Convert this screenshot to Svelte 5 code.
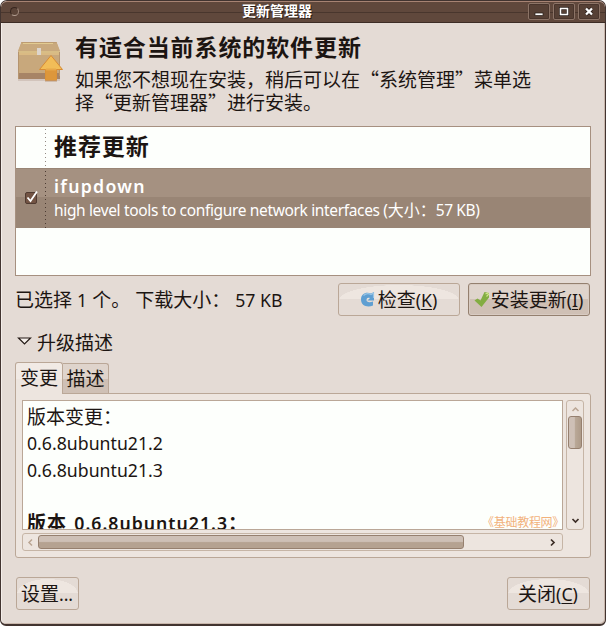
<script>
  const changes = ['0.6.8ubuntu21.2', '0.6.8ubuntu21.3'];
  let checked = $state(true);
</script>

<main class="window">
  <header class="titlebar">
    <i class="dot"></i>
    <h1>更新管理器</h1>
    <div class="controls">
      <button aria-label="最小化"><svg width="12" height="10"><rect x="2" y="6" width="8" height="2.500" fill="#fff" stroke="#241a16" stroke-width=".7"/></svg></button>
      <button aria-label="最大化"><svg width="12" height="10"><rect x="2.500" y="1.500" width="7" height="6" fill="none" stroke="#241a16" stroke-width="3"/><rect x="2.500" y="1.500" width="7" height="6" fill="none" stroke="#fff" stroke-width="1.600"/></svg></button>
      <button aria-label="关闭"><svg width="12" height="10"><path d="M3 1.500l6 6M9 1.500l-6 6" stroke="#241a16" stroke-width="3.600"/><path d="M3 1.500l6 6M9 1.500l-6 6" stroke="#fff" stroke-width="2.300"/></svg></button>
    </div>
  </header>

  <section class="intro">
    <svg class="package" width="48" height="46" viewBox="0 0 48 46">
      <path d="M4.500 3h35L43 13v27H1V13z" fill="#c8a87c"/>
      <path d="M4.500 3h35L43 12H1z" fill="#c9a97d"/>
      <path d="M4.500 3.500h35" stroke="#bd9c72"/>
      <path d="M6 4.500h30" stroke="#e2cb91"/>
      <path d="M2 13h41" stroke="#dec48a" stroke-width="1.500"/>
      <path d="M2 15h41" stroke="#e0c086" stroke-width="1.500"/>
      <path d="M1 34h42v6H1z" fill="#a78466"/>
      <path d="M1.500 13v27M42.500 13v24" stroke="#b5946f"/>
      <path d="M1 41h42" stroke="#cdbdb3" stroke-width="1.500"/>
      <path d="M20 9h4v7h-4z" fill="#ddd5cd"/>
      <path d="M34 16.500l11.500 14h-6v11H28.500v-11h-6z" fill="#f2bd58" stroke="#d88c34"/>
      <path d="M28.500 31h11v10h-11z" fill="#dd973b"/>
      <path d="M29 30.500h10" stroke="#e8a849" stroke-width="2"/>
      <path d="M28 42h12" stroke="#b89b83"/>
    </svg>
    <div>
      <h2>有适合当前系统的软件更新</h2>
      <p>如果您不想现在安装，稍后可以在“系统管理”菜单选</p>
      <p>择“更新管理器”进行安装。</p>
    </div>
  </section>

  <section class="updates">
    <div class="group"><i class="divider"></i><h2>推荐更新</h2></div>
    <div class="update">
      <button class="check" aria-label="选择" onclick={() => (checked = !checked)}>
        {#if checked}<svg width="13" height="13" viewBox="0 0 13 13"><path d="M2.500 6.500l3 3.500L12 0.500" fill="none" stroke="#fff" stroke-width="1.800"/></svg>{/if}
      </button>
      <i class="divider"></i>
      <div class="info">
        <strong>ifupdown</strong>
        <span class="desc"><span class="la">high level tools to configure network interfaces (</span>大小：<span class="la kb">57 KB)</span></span>
      </div>
    </div>
  </section>

  <section class="status">
    <p>已选择<span class="la one">1</span>个。<span class="dl">下载大小：</span><span class="la size">57 KB</span></p>
    <button class="btn wide">
      <svg width="16" height="17" viewBox="0 0 16 17"><path d="M14 9.500H7.500l2.500-2.500C7.500 6 6.500 7.500 6.500 9c0 2 2.500 2.800 6.500 1.500v4C7 17 1 14.500 1 8.500 1 3 6 .500 11 2.500L14 1z" fill="#5f9fd2"/><path d="M3.500 4.500Q7 1.300 11 3.500l2.500-1.500v5" fill="none" stroke="#9bc6e5" stroke-width="1.200"/></svg>
      <span>检查<span class="la">(<u>K</u>)</span></span>
    </button>
    <button class="btn wide primary">
      <svg width="16" height="17" viewBox="0 0 16 17"><path d="M.500 9.500l3-2 3 2L10.500 1l4.500 1v4.500L7.500 16z" fill="#83ad42"/><path d="M11.500 3l2-1 1 1.500-2 2" fill="none" stroke="#d3e58e" stroke-width="1.200"/></svg>
      <span>安装更新<span class="la">(<u class="serif-i">I</u>)</span></span>
    </button>
  </section>

  <div class="expander">
    <svg width="15" height="9"><path d="M1.500 1h12L7.500 7z" fill="#f5efeb" stroke="#241a16" stroke-width="1.200"/></svg>
    <span>升级描述</span>
  </div>

  <nav class="tabs">
    <button class="tab active">变更</button>
    <button class="tab">描述</button>
  </nav>

  <section class="panel">
    <div class="row">
      <div class="view">
        <p>版本变更：</p>
        {#each changes as c}<p class="la">{c}</p>{/each}
        <p></p>
        <p class="bold">版本 <span class="la">0.6.8ubuntu21.3</span>：</p>
        <small>《基础教程网》</small>
      </div>
      <div class="bar vertical">
        <svg width="9" height="6"><path d="M1.500 5l3-3 3 3" fill="none" stroke="#baa593" stroke-width="1.500"/></svg>
        <i class="thumb"></i>
        <svg width="9" height="6"><path d="M1.500 1l3 3 3-3" fill="none" stroke="#3d2e27" stroke-width="1.700"/></svg>
      </div>
    </div>
    <div class="bar horizontal">
      <svg width="6" height="9"><path d="M5 1.500l-3 3 3 3" fill="none" stroke="#baa593" stroke-width="1.500"/></svg>
      <i class="thumb"></i>
      <svg width="6" height="9"><path d="M1 1.500l3 3-3 3" fill="none" stroke="#3d2e27" stroke-width="1.700"/></svg>
    </div>
  </section>

  <footer>
    <button class="btn settings"><span>设置<span class="la">...</span></span></button>
    <button class="btn close"><span>关闭<span class="la">(<u>C</u>)</span></span></button>
  </footer>
</main>

<style>
  :global(body) { background: #fff; }
  * { box-sizing: border-box; }
  h1, h2, p { margin: 0; }
  button { padding: 0; margin: 0; font: inherit; color: inherit; }
  svg { display: block; flex: none; }
  .window {
    width: 606px; height: 626px; overflow: hidden; display: flex; flex-direction: column;
    font: 19px/23px "Noto Sans CJK SC", sans-serif; color: #1c1512; white-space: nowrap;
    background: #e4dbd5; border: 1px solid #423430; border-bottom-width: 2px; border-radius: 7px 7px 6px 6px;
    box-shadow: inset 1px 0 #f4eeea, inset -1px -1px #c9b7ac;
  }
  .la { font-family: "Noto Sans", sans-serif; font-size: 17.7px; }
  .titlebar {
    height: 22px; flex: none; display: grid; grid-template-columns: 26px 1fr 78px; align-items: center;
    background: linear-gradient(transparent 10px, #49362d 10px, #49362d 11px, transparent 11px), #60483c;
    border-top: 1px solid #a78373; border-bottom: 1px solid #3c2c25; border-radius: 6px 6px 0 0;
  }
  .dot { width: 9px; height: 9px; margin: -2px 0 0 9px; border: 1px solid; border-color: #37261f #a28b7e #b39e91 #37261f; border-radius: 50%; background: #5b4438; }
  h1 { text-align: center; font-size: 14px; line-height: 20px; margin: -4px 0 0 0; font-weight: 700; color: #fff; text-shadow: 1px 1px #2c1d16; }
  .controls { display: flex; gap: 3px; margin: -1px 0 0 1px; }
  .controls button { width: 22px; height: 17px; display: flex; align-items: center; justify-content: center; border: 1px solid #8c7467; background: #564035; box-shadow: inset 0 0 0 1px #49352c; border-radius: 2px; }
  .intro { display: flex; height: 103px; flex: none; padding: 11px 0 0 16px; }
  .package { margin-top: 5px; margin-right: 10px; }
  h2 { font-size: 23px; letter-spacing: .9px; line-height: 25px; font-weight: 700; }
  .intro h2 { margin-bottom: 8px; }
  .updates { height: 150px; margin: 0 14px; flex: none; background: #fdfffc; border: 1px solid #a69080; }
  .group { height: 41px; display: flex; }
  .group .divider { margin-left: 29px; }
  .group h2 { margin: 6px 0 0 8px; }
  .divider { width: 1px; flex: none; background: repeating-linear-gradient(transparent 0 2px, #4c3c33 2px 3px, transparent 3px 4px); }
  .group .divider { opacity: .6; }
  .update { height: 60px; display: flex; color: #fff; background: linear-gradient(#a59181 28px, #998575 28px); border-top: 1px solid #998575; }
  .check { width: 12px; height: 12px; margin: 23px 8px 0 9px; border: 1px solid #503b31; border-radius: 2px; background: #735444; }
  .check svg { margin: -2px 0 0 -1px; }
  .info { display: flex; flex-direction: column; margin-left: 8px; }
  strong { font: 600 17.700px/22px "Noto Sans", sans-serif; letter-spacing: 1.300px; margin-top: 6px; }
  .desc { font-size: 16px; line-height: 24px; }
  .desc .la { font-size: 15.500px; letter-spacing: -.35px; }
  .status { display: flex; height: 33px; margin: 7px 15px 0 14px; flex: none; }
  .status p { flex: 1; line-height: 31px; }
  .one { margin: 0 5px; }
  .dl { margin-left: 5px; }
  .size { margin-left: 5px; }
  .btn {
    height: 33px; display: flex; justify-content: center; align-items: center; border: 1px solid #baa797; border-radius: 3px;
    background: linear-gradient(transparent 15px, #e4dbd5 15px), radial-gradient(ellipse 50% 15px at 50% 16px, #eee6e0 99%, #e4dbd5 100%);
    line-height: 29px;
  }
  .btn > span { margin: 0 1px 1px 0; }
  .wide { width: 122px; }
  .primary { margin-left: 8px; border-color: #94806f; background: linear-gradient(#dfd4cc 15px, #cfc0b5 15px); box-shadow: inset 0 0 0 1px #d8cbc2; }
  .wide svg { margin-right: 2px; }
  .primary svg { margin-right: 1px; }
  u { text-decoration-thickness: 1px; text-underline-offset: 2px; }
  .serif-i { font-family: Verdana, "Noto Sans", sans-serif; }
  .expander { display: flex; align-items: center; gap: 5px; height: 24px; margin: 13px 0 0 16px; flex: none; }
  .tabs { display: flex; align-items: flex-end; height: 32px; margin: 9px 0 -1px 14px; flex: none; position: relative; z-index: 1; }
  .tab { width: 46px; height: 30px; margin-bottom: 1px; border: 1px solid #baa797; border-left: 0; border-bottom: 0; border-radius: 0 3px 0 0; background: linear-gradient(#dfd4cc 15px, #cfc0b5 15px); line-height: 26px; padding-bottom: 2px; }
  .tab.active { width: 48px; height: 32px; margin-bottom: 0; border-left: 1px solid #baa797; border-radius: 3px 3px 0 0; background: linear-gradient(#f1eae5 16px, #ede5df 16px); padding-bottom: 3px; }
  .panel { height: 165px; margin: 0 14px; flex: none; padding: 6px; border: 1px solid #baa797; border-radius: 0 3px 3px 3px; background: #ede5df; }
  .row { display: flex; gap: 3px; height: 130px; }
  .view { width: 541px; height: 130px; position: relative; overflow: hidden; border: 1px solid #baa797; background: #fdfffc; padding: 2px 4px; }
  .view p { height: 27px; line-height: 27px; }
  .view p:first-child { line-height: 25px; }
  .view .bold { font-weight: 700; letter-spacing: 1px; line-height: 22px; }
  .view .bold .la { font-weight: 600; letter-spacing: 1px; margin-left: 2px; }
  small { position: absolute; right: -2px; bottom: -1px; font-size: 12px; line-height: 16px; letter-spacing: -.3px; color: #f2b27c; }
  .bar { display: flex; align-items: center; border: 1px solid #c6b5a6; border-radius: 3px; background: #ede5df; }
  .bar svg:last-child { margin-left: auto; }
  .vertical { flex-direction: column; width: 18px; height: 130px; padding: 5px 0; }
  .vertical svg:last-child { margin: auto 0 0; }
  .thumb { border: 1px solid #96806f; border-radius: 3px; flex: none; }
  .vertical .thumb { width: 14px; height: 33px; margin-top: 4px; background: linear-gradient(90deg, #cec0b6 45%, #baa998 50%, #ae9b89); }
  .horizontal { height: 18px; width: 541px; margin-top: 3px; padding: 0 6px 0 4px; }
  .horizontal .thumb { width: 426px; height: 14px; margin-left: 5px; background: linear-gradient(#cec0b6 45%, #b5a291 55%); }
  footer { display: flex; justify-content: space-between; margin: 19px 15px 0; flex: none; }
  .settings { width: 63px; }
  .close { width: 83px; }
</style>
